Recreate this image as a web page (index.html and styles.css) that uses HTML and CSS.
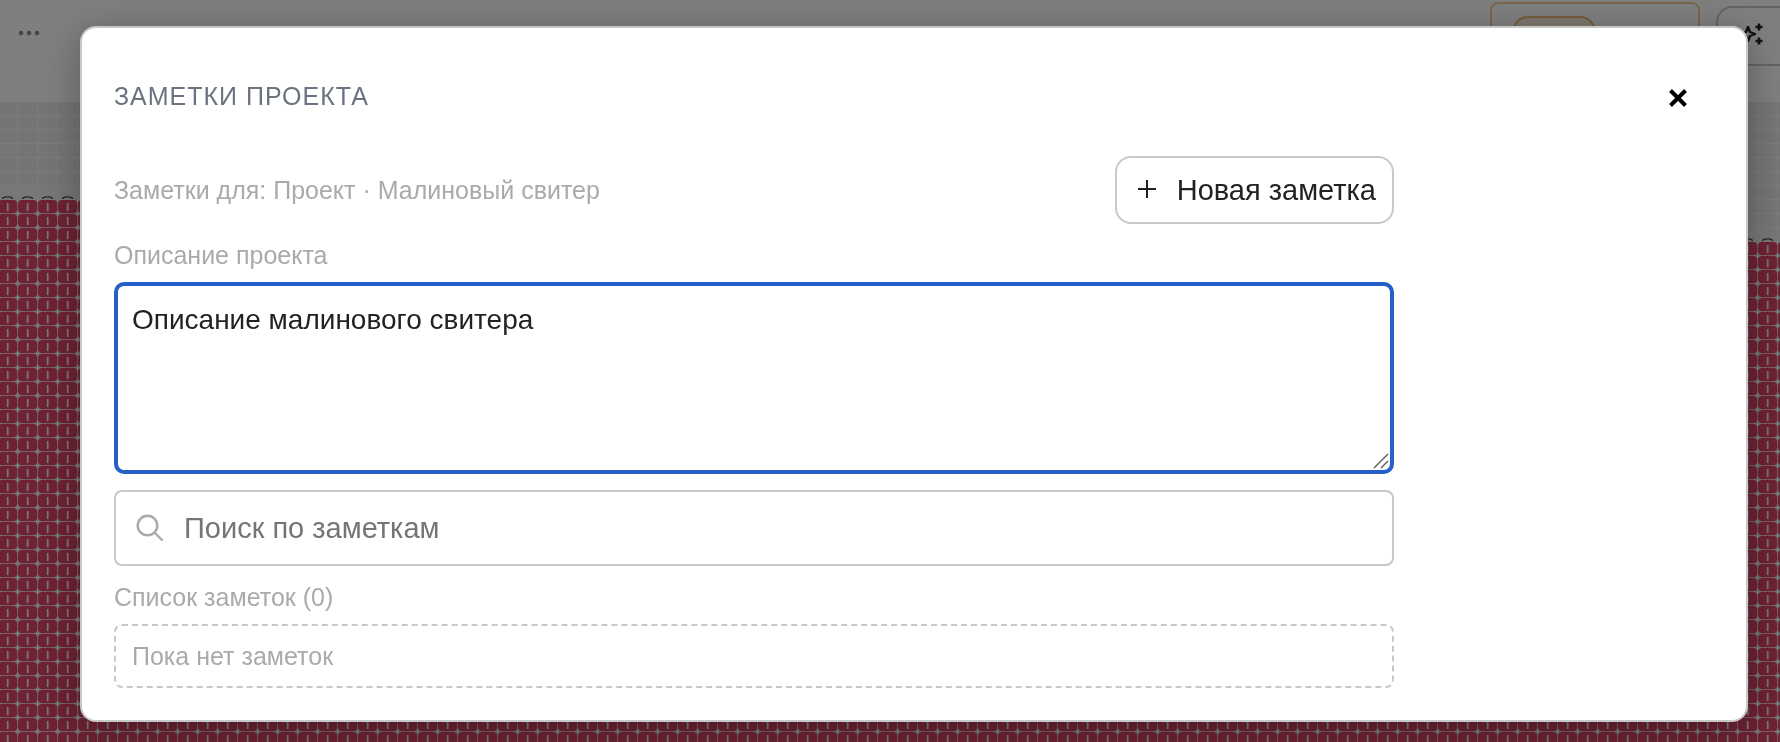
FILE: index.html
```html
<!DOCTYPE html>
<html lang="ru">
<head>
    <title>Заметки проекта</title>
    <meta charset="UTF-8" />
    <meta name="viewport" content="width=device-width" />
    <link rel="stylesheet" href="styles.css">
</head>
<body>
    <div class="editor" aria-hidden="true">
        <header class="toolbar">
            <button class="more" tabindex="-1">
                <svg width="24" height="8" viewBox="0 0 24 8"><circle cx="4" cy="4" r="2.3" /><circle cx="12" cy="4" r="2.3" /><circle cx="20" cy="4" r="2.3" /></svg>
            </button>
            <div class="plan"><div class="plan-pill"></div></div>
            <button class="magic" tabindex="-1">
                <svg width="32" height="32" viewBox="0 0 32 32" fill="none" stroke="#222" stroke-width="2.4" stroke-linejoin="round">
                    <path d="M10 7L12 12L17 14L12 16L10 21L8 16L3 14L8 12Z" />
                    <path d="M21 3.500v7M17.500 7h7M21 17.500v7M17.500 21h7" stroke-width="2.6" />
                </svg>
            </button>
        </header>
        <svg class="board">
            <defs>
                <pattern id="empty" x="-2" y="0" width="20" height="14" patternUnits="userSpaceOnUse">
                    <rect width="20" height="14" fill="#f6f6f6" />
                    <rect width="19" height="13" rx="3" fill="#ebebeb" />
                </pattern>
                <pattern id="stitch" x="-2" y="0" width="20" height="14" patternUnits="userSpaceOnUse">
                    <rect width="20" height="14" fill="#eee" />
                    <rect width="19.3" height="13.3" rx="4" fill="#dc4466" />
                    <rect x="8.8" y="3" width="1.8" height="8" fill="#eee" />
                </pattern>
                <pattern id="edge" x="-2" y="0" width="20" height="14" patternUnits="userSpaceOnUse">
                    <rect width="20" height="14" fill="#f4f4f4" />
                    <rect width="19" height="14" fill="#efefef" />
                    <path d="M4 12.500L7 11H12L15 12.500" fill="none" stroke="#222" stroke-width="1.2" />
                </pattern>
            </defs>
            <rect width="100%" height="100%" fill="url(#empty)" />
            <rect y="84" width="50%" height="14" fill="url(#edge)" />
            <rect y="98" width="50%" height="100%" fill="url(#stitch)" />
            <rect x="50%" y="126" width="50%" height="14" fill="url(#edge)" />
            <rect x="50%" y="140" width="50%" height="100%" fill="url(#stitch)" />
        </svg>
    </div>

    <div class="overlay">
        <section class="modal" role="dialog" aria-modal="true" aria-labelledby="modal-title">
            <header class="modal-header">
                <h1 id="modal-title">ЗАМЕТКИ ПРОЕКТА</h1>
                <button class="close" aria-label="Закрыть">
                    <svg width="20" height="20" viewBox="0 0 20 20"><path d="M2.500 2.500L17.500 17.500M17.500 2.500L2.500 17.500" /></svg>
                </button>
            </header>

            <div class="notes">
                <div class="notes-top">
                    <p class="muted">Заметки для: Проект · Малиновый свитер</p>
                    <button class="new-note">
                        <svg width="20" height="20" viewBox="0 0 20 20"><path d="M10 0v18M1 9h18" /></svg>
                        Новая заметка
                    </button>
                </div>

                <div class="field">
                    <label class="muted" for="description">Описание проекта</label>
                    <div class="textarea-wrap">
                        <textarea id="description">Описание малинового свитера</textarea>
                        <svg class="grip" width="16" height="16" viewBox="0 0 16 16"><path d="M1 15L15 1M8 15L15 8" /></svg>
                    </div>
                </div>

                <div class="search">
                    <svg width="28" height="28" viewBox="0 0 28 28"><circle cx="11.500" cy="11.500" r="9.800" /><path d="M18.500 18.500l8 8" /></svg>
                    <input type="text" placeholder="Поиск по заметкам" aria-label="Поиск по заметкам" />
                </div>

                <div class="field">
                    <h2 class="muted">Список заметок (0)</h2>
                    <p class="empty-list muted">Пока нет заметок</p>
                </div>
            </div>
        </section>
    </div>
</body>
</html>
```

FILE: styles.css
```css
* {
    box-sizing: border-box;
}
body {
    margin: 0;
    background: white;
    color: #222;
    font-family: "Liberation Sans", Arial, sans-serif;
    font-size: 29px;
    overflow: hidden;
}
h1, h2, p {
    margin: 0;
    font-weight: normal;
}
button, input, textarea {
    font: inherit;
    color: inherit;
}
svg {
    display: block;
    flex: none;
}

/* page behind the modal */
.editor {
    display: flex;
    flex-direction: column;
    height: 100vh;
}
.toolbar {
    display: flex;
    align-items: flex-start;
    height: 102px;
    overflow: hidden;
}
.more {
    margin: 29px auto 0 17px;
    padding: 0;
    border: 0;
    background: none;
    fill: #828a96;
}
.plan {
    width: 210px;
    height: 70px;
    margin-top: 2px;
    padding: 12px 20px;
    border: 2px solid #f2cf96;
    border-radius: 8px;
}
.plan-pill {
    width: 84px;
    height: 40px;
    border: 2px solid #eab676;
    border-radius: 16px;
    background: #fbeeda;
}
.magic {
    display: flex;
    width: 84px;
    height: 60px;
    margin: 6px -20px 0 16px;
    padding: 12px 20px;
    border: 2px solid #c8c8c8;
    border-radius: 16px;
    background: white;
}
.board {
    width: 100%;
    flex: 1;
}

/* modal */
.overlay {
    position: fixed;
    inset: 0;
    padding: 26px 32px 20px 80px;
    background: rgba(0, 0, 0, 0.5);
}
.modal {
    padding: 32px;
    border: 2px solid #c8c8c8;
    border-radius: 16px;
    background: white;
    box-shadow: 0 8px 40px rgba(0, 0, 0, 0.3);
}
.modal-header {
    display: flex;
    justify-content: space-between;
    align-items: center;
    height: 72px;
    margin-bottom: 24px;
    padding-right: 12px;
}
h1 {
    color: #6b7280;
    font-size: 25px;
    letter-spacing: 1px;
}
.close {
    padding: 16px 14px 12px;
    border: 0;
    background: none;
    stroke: black;
    stroke-width: 4;
}
.notes {
    display: flex;
    flex-direction: column;
    gap: 16px;
    max-width: 1280px;
}
.notes-top {
    display: flex;
    justify-content: space-between;
    align-items: center;
}
.muted {
    color: #aaa;
    font-size: 25px;
    line-height: 30px;
}
.new-note {
    display: flex;
    align-items: center;
    gap: 20px;
    height: 68px;
    padding: 0 16px 0 20px;
    border: 2px solid #c8c8c8;
    border-radius: 16px;
    background: white;
}
.new-note svg {
    stroke: #222;
    stroke-width: 2;
}
.field {
    display: flex;
    flex-direction: column;
    gap: 12px;
}
.textarea-wrap {
    position: relative;
}
textarea {
    display: block;
    width: 100%;
    height: 192px;
    padding: 16px 14px;
    border: 4px solid #2560c8;
    border-radius: 10px;
    outline: none;
    background: white;
    font-size: 28px;
    line-height: 36px;
    resize: none;
}
.grip {
    position: absolute;
    right: 5px;
    bottom: 5px;
    fill: none;
    stroke: #666;
    stroke-width: 1.5;
}
.search {
    display: flex;
    align-items: center;
    gap: 20px;
    height: 76px;
    padding: 0 20px;
    border: 2px solid #c8c8c8;
    border-radius: 8px;
}
.search svg {
    fill: none;
    stroke: #aaa;
    stroke-width: 2.4;
}
.search input {
    flex: 1;
    min-width: 0;
    padding: 0;
    border: 0;
    outline: none;
    background: none;
}
.search input::placeholder {
    color: #757575;
}
.empty-list {
    padding: 15px 16px;
    border: 2px dashed #c8c8c8;
    border-radius: 8px;
}
```
